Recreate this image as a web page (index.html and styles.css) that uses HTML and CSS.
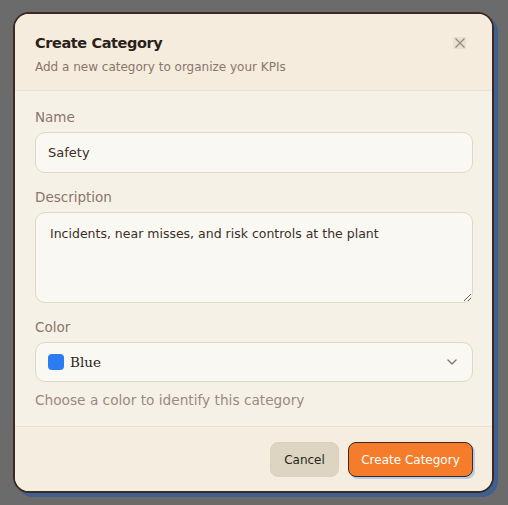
FILE: index.html
```html
<!DOCTYPE html>
<html lang="en">
<head>
<meta charset="utf-8">
<title>Create Category</title>
<link rel="stylesheet" href="styles.css">
</head>
<body>
<div class="overlay">
  <div class="dialog">
    <div class="dialog-header">
      <div class="titles">
        <h2 class="title">Create Category</h2>
        <p class="subtitle">Add a new category to organize your KPIs</p>
      </div>
      <button class="close" aria-label="Close">
        <svg width="12" height="12" viewBox="0 0 12 12"><path d="M1.5 1.5 L10.5 10.5 M10.5 1.5 L1.5 10.5" stroke="#9a8a80" stroke-width="1.3" fill="none"/></svg>
      </button>
    </div>
    <div class="dialog-body">
      <div class="field">
        <label class="label">Name</label>
        <input class="input" type="text" value="Safety">
      </div>
      <div class="field">
        <label class="label">Description</label>
        <textarea class="textarea">Incidents, near misses, and risk controls at the plant</textarea>
      </div>
      <div class="field">
        <label class="label">Color</label>
        <div class="select">
          <span class="swatch"></span>
          <span class="select-value">Blue</span>
          <svg class="chevron" width="12" height="12" viewBox="0 0 12 12"><path d="M2 4 L6 8 L10 4" stroke="#8a766b" stroke-width="1.4" fill="none" stroke-linecap="round" stroke-linejoin="round"/></svg>
        </div>
        <p class="hint">Choose a color to identify this category</p>
      </div>
    </div>
    <div class="dialog-footer">
      <button class="btn btn-cancel">Cancel</button>
      <button class="btn btn-primary">Create Category</button>
    </div>
  </div>
</div>
</body>
</html>
```

FILE: styles.css
```css
* { box-sizing: border-box; }
html, body { margin: 0; padding: 0; }
body {
  background: #6b6b6b;
  font-family: "DejaVu Sans", sans-serif;
  width: 508px;
  height: 505px;
  overflow: hidden;
}
.overlay {
  padding: 12px 0 0 13px;
}
.dialog {
  width: 481px;
  height: 481px;
  background: #f6f1e6;
  border: 2px solid #3b2a22;
  border-radius: 16px;
  box-shadow: 4px 4px 0 #405e8e;
  display: flex;
  flex-direction: column;
  overflow: hidden;
}
.dialog-header {
  background: #f5ecdd;
  border-bottom: 1px solid #ebe2d2;
  padding: 18px 20px 0 20px;
  height: 77px;
  display: flex;
  justify-content: space-between;
  align-items: flex-start;
}
.title {
  margin: 0;
  font-size: 14.5px;
  letter-spacing: -0.4px;
  line-height: 22px;
  font-weight: bold;
  color: #2a1f1a;
}
.subtitle {
  margin: 4px 0 0 0;
  font-size: 12px;
  line-height: 18px;
  color: #8a766b;
}
.close {
  margin: 5px 6px 0 0;
  width: 13px;
  height: 12px;
  padding: 0;
  border: none;
  background: #e9e0d2;
  display: flex;
  align-items: center;
  justify-content: center;
}
.dialog-body {
  padding: 16px 20px 0 20px;
  display: flex;
  flex-direction: column;
  gap: 14px;
  flex: 1;
  border-bottom: 1px solid #ebe2d2;
}
.field {
  display: flex;
  flex-direction: column;
}
.label {
  font-size: 13.5px;
  line-height: 20px;
  color: #8a766b;
  margin-bottom: 5px;
}
.input, .textarea, .select {
  width: 438px;
  background: #faf8f2;
  border: 1px solid #e0d8c6;
  border-radius: 10px;
  font-family: "DejaVu Sans", sans-serif;
  font-size: 13px;
  color: #3a2e28;
}
.input {
  height: 41px;
  padding: 0 12px;
  outline: none;
}
.textarea {
  height: 91px;
  padding: 12px 14px;
  font-size: 12.5px;
  resize: vertical;
  line-height: 18px;
  outline: none;
}
.select {
  height: 40px;
  padding: 0 12px;
  display: flex;
  align-items: center;
}
.swatch {
  width: 16px;
  height: 16px;
  border-radius: 4px;
  background: #2a7cf0;
  margin-right: 6px;
}
.select-value {
  font-family: "DejaVu Serif", serif;
  font-size: 13.5px;
  font-weight: 500;
  color: #2a1f1a;
  flex: 1;
}
.chevron {
  margin-right: 2px;
}
.hint {
  margin: 8px 0 0 0;
  font-size: 13.7px;
  line-height: 20px;
  color: #9a8a80;
}
.dialog-footer {
  background: #f5eddf;
  height: 64px;
  padding: 15px 19px 0 20px;
  display: flex;
  justify-content: flex-end;
  align-items: flex-start;
  gap: 9px;
}
.btn {
  height: 35px;
  border-radius: 8px;
  font-family: "DejaVu Sans", sans-serif;
  font-size: 12px;
  cursor: pointer;
}
.btn-cancel {
  width: 69px;
  background: #ddd5c2;
  border: 1px solid #d9d0bd;
  color: #2a1f1a;
  font-weight: 500;
}
.btn-primary {
  width: 125px;
  background: #f47c2b;
  border: 1px solid #3b2a22;
  color: #ffffff;
  box-shadow: 2px 2px 0 #b9cde6;
}
```
